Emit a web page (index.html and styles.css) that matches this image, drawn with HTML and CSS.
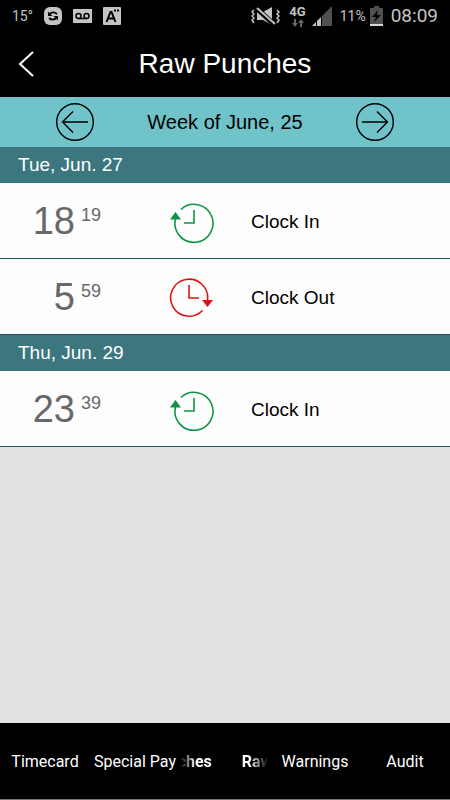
FILE: index.html
```html
<!DOCTYPE html>
<html lang="en">
<head>
  <meta charset="UTF-8">
  <meta name="viewport" content="width=device-width, initial-scale=1.0">
  <link rel="stylesheet" href="styles.css">
  <title>Raw Punches</title>
</head>
<body>

<div class="status-bar">
  <div class="status-left">
    <span class="temperature">15°</span>
    <svg width="18" height="18" viewBox="0 0 18 18">
      <rect width="18" height="18" rx="6" fill="#c4c4c4"/>
      <path d="M5 7.500Q9 3.500 13 7M13 10.500Q9 14.500 5 11" fill="none" stroke="#000" stroke-width="1.800"/>
      <path d="M4 4.500v4.500h4.500zM14 13.500V9H9.500z" fill="#000"/>
    </svg>
    <svg width="19" height="14" viewBox="0 0 19 14">
      <rect width="19" height="14" fill="#c4c4c4"/>
      <circle cx="5.500" cy="7" r="2.500" fill="none" stroke="#000" stroke-width="1.500"/>
      <circle cx="13.500" cy="7" r="2.500" fill="none" stroke="#000" stroke-width="1.500"/>
      <path d="M5 9.500h9" stroke="#000" stroke-width="1.500"/>
    </svg>
    <svg width="18" height="18" viewBox="0 0 18 18">
      <rect width="18" height="18" rx="1" fill="#c4c4c4"/>
      <path d="M3.500 15L7.500 5h1L12.500 15M5 11.500h6" fill="none" stroke="#000" stroke-width="2"/>
      <path d="M11 3.500h2M14 3.500h2" stroke="#000" stroke-width="2"/>
    </svg>
  </div>
  <div class="status-right">
    <svg class="mute" width="30" height="18" viewBox="0 0 30 18">
      <path d="M6 5h6l9-5v18l-9-5H6z" fill="#c4c4c4"/>
      <path d="M5 1l19 17" stroke="#000" stroke-width="5"/>
      <path d="M6 1l18 16" stroke="#c4c4c4" stroke-width="2"/>
      <path d="M3 3L1 5l2 2-2 2 2 2-2 2 2 3M26 3l2 2-2 2 2 2-2 2 2 2-2 3" fill="none" stroke="#c4c4c4" stroke-width="1.500"/>
    </svg>
    <span class="network">
      4G
      <svg width="12" height="8" viewBox="0 0 12 8">
        <path d="M2 0h2v4h2L3 8 0 4h2zM8 8h2V4h2L9 0 6 4h2z" fill="#666"/>
      </svg>
    </span>
    <svg class="signal" width="20" height="20" viewBox="0 0 20 20">
      <path d="M20 0v20H10V10z" fill="#505050"/>
      <path d="M0 20l4-4v4zM5 20v-5l4-4v9z" fill="#c4c4c4"/>
    </svg>
    <span class="percent">11%</span>
    <svg class="battery" width="13" height="20" viewBox="0 0 13 20">
      <path d="M4 0h5v2h4v18H0V2h4z" fill="#505050"/>
      <path d="M8 4l-6 7h4l-2 5 7-7H7z" fill="#000"/>
      <path d="M0 19h13" stroke="#d8d8d8" stroke-width="2"/>
    </svg>
    <span class="time">08:09</span>
  </div>
</div>

<header class="header">
  <button class="back" aria-label="Back">
    <svg width="16" height="26" viewBox="0 0 16 26">
      <path d="M15 1L2 13l13 12" fill="none" stroke="#fff" stroke-width="2"/>
    </svg>
  </button>
  <h1>Raw Punches</h1>
</header>

<div class="week">
  <button aria-label="Previous week">
    <svg width="38" height="38" viewBox="0 0 38 38">
      <circle cx="19" cy="19" r="18.300"/>
      <path d="M32 19H7M17 8.500L6.500 19 17 29.500"/>
    </svg>
  </button>
  <h2>Week of June, 25</h2>
  <button aria-label="Next week">
    <svg width="38" height="38" viewBox="0 0 38 38">
      <circle cx="19" cy="19" r="18.300"/>
      <path d="M6 19h25M21 8.500L31.500 19 21 29.500"/>
    </svg>
  </button>
</div>

<main class="punches">
  <h3 class="day">Tue, Jun. 27</h3>
  <div class="punch">
    <span class="hour">18</span>
    <span class="minute">19</span>
    <svg class="clock-in" width="46" height="42" viewBox="0 0 46 42">
      <path class="line" d="M12 8.500A19 19 0 1 1 6.500 18M25 9v13H15"/>
      <path class="arrow" d="M1 18.500h11L6.500 11z"/>
    </svg>
    <span class="label">Clock In</span>
  </div>
  <div class="punch">
    <span class="hour">5</span>
    <span class="minute">59</span>
    <svg class="clock-out" width="46" height="42" viewBox="0 0 46 42">
      <path class="line" d="M33.500 33.500A18.500 18.500 0 1 1 38.500 23M20 8v13h10"/>
      <path class="arrow" d="M33 23h11l-5.500 7z"/>
    </svg>
    <span class="label">Clock Out</span>
  </div>

  <h3 class="day">Thu, Jun. 29</h3>
  <div class="punch">
    <span class="hour">23</span>
    <span class="minute">39</span>
    <svg class="clock-in" width="46" height="42" viewBox="0 0 46 42">
      <path class="line" d="M12 8.500A19 19 0 1 1 6.500 18M25 9v13H15"/>
      <path class="arrow" d="M1 18.500h11L6.500 11z"/>
    </svg>
    <span class="label">Clock In</span>
  </div>
</main>

<nav class="tabs">
  <a href="#timecard">Timecard</a>
  <a href="#special-pay">Special Pay</a>
  <a class="active" href="#raw-punches"><span>ches</span><span>Raw</span></a>
  <a href="#warnings">Warnings</a>
  <a href="#audit">Audit</a>
</nav>

</body>
</html>
```
FILE: styles.css
```css
* {
  box-sizing: border-box;
}

body {
  font-family: "Liberation Sans", Arial, sans-serif;
  margin: 0;
  min-height: 100vh;
  display: flex;
  flex-direction: column;
  background-color: #e3e1e4;
}

h1, h2, h3 {
  margin: 0;
  font-weight: normal;
}

button {
  display: flex;
  padding: 0;
  background: none;
  border: none;
  cursor: pointer;
}

.status-bar {
  display: flex;
  justify-content: space-between;
  height: 31px;
  padding: 0 12px;
  background-color: #000;
  color: #c4c4c4;
  font-family: Roboto, sans-serif;
}

.status-left,
.status-right {
  display: flex;
  align-items: center;
}

.status-left {
  gap: 11px;
}

.temperature {
  font-size: 14px;
}

.network {
  display: flex;
  flex-direction: column;
  align-items: center;
  margin: 0 6px 0 8px;
  font-size: 13px;
  font-weight: bold;
  line-height: 14px;
}

.percent {
  margin: 0 4px 0 8px;
  font-size: 14px;
}

.time {
  margin-left: 8px;
  font-size: 19px;
}

.header {
  display: grid;
  grid-template-columns: 50px 1fr 50px;
  align-items: center;
  height: 66px;
  background-color: #000;
  color: #fff;
}

.back {
  padding-left: 18px;
}

.header h1 {
  font-size: 28px;
  text-align: center;
}

.week {
  display: flex;
  justify-content: space-between;
  align-items: center;
  height: 50px;
  padding: 0 56px;
  background-color: #70c3c9;
}

.week h2 {
  font-size: 20px;
}

.week svg {
  fill: none;
  stroke: #000;
  stroke-width: 1.4;
}

.punches {
  flex: 1;
}

.day {
  height: 36px;
  padding-left: 18px;
  background-color: #3c777f;
  color: #fff;
  font-size: 19px;
  line-height: 36px;
}

.punch {
  display: grid;
  grid-template-columns: 75fr 94fr 82fr 199fr;
  align-items: center;
  height: 76px;
  padding-top: 2px;
  border-bottom: 1px solid #1d5a57;
  background-color: #fefdfe;
}

.hour {
  color: #686868;
  font-size: 38px;
  text-align: right;
}

.minute {
  padding: 0 0 12px 6px;
  color: #686868;
  font-size: 18px;
}

.label {
  font-size: 19px;
}

.line {
  fill: none;
  stroke-width: 1.6;
}

.clock-in {
  fill: #0c9444;
  stroke: #0c9444;
}

.clock-out {
  fill: #dc1414;
  stroke: #dc1414;
}

.arrow {
  stroke: none;
}

.tabs {
  display: grid;
  grid-template-columns: repeat(5, minmax(0, 1fr));
  height: 77px;
  background-color: #000;
  border-bottom: 1px solid #777;
}

.tabs a {
  display: flex;
  align-items: center;
  justify-content: center;
  color: #fff;
  font-family: Roboto, sans-serif;
  font-size: 16px;
  text-decoration: none;
  white-space: nowrap;
}

.tabs .active {
  gap: 30px;
  overflow: hidden;
  font-weight: bold;
  mask-image: linear-gradient(to right, transparent, #000 16px, #000 calc(100% - 20px), transparent calc(100% - 2px));
}
```
